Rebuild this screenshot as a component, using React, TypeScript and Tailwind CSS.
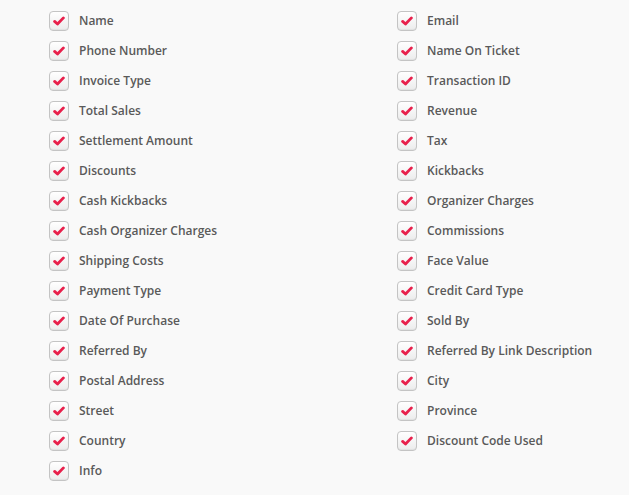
import React from "react";

const left = [
  "Name",
  "Phone Number",
  "Invoice Type",
  "Total Sales",
  "Settlement Amount",
  "Discounts",
  "Cash Kickbacks",
  "Cash Organizer Charges",
  "Shipping Costs",
  "Payment Type",
  "Date Of Purchase",
  "Referred By",
  "Postal Address",
  "Street",
  "Country",
  "Info",
];

const right = [
  "Email",
  "Name On Ticket",
  "Transaction ID",
  "Revenue",
  "Tax",
  "Kickbacks",
  "Organizer Charges",
  "Commissions",
  "Face Value",
  "Credit Card Type",
  "Sold By",
  "Referred By Link Description",
  "City",
  "Province",
  "Discount Code Used",
];

function Check({ label }: { label: string }) {
  return (
    <label className="flex h-[30px] items-center gap-[10px]">
      <span className="flex h-[20px] w-[20px] items-center justify-center rounded-[4px] border border-[#c4c4c4] bg-gradient-to-b from-white to-[#ececec] shadow-[inset_0_-1px_1px_rgba(0,0,0,0.05)]">
        <svg width="12" height="10" viewBox="0 0 12 10">
          <path
            d="M1.6 5.4 L4.5 8 L10.4 1.9"
            fill="none"
            stroke="#e8204b"
            strokeWidth="2.8"
            strokeLinecap="round"
            strokeLinejoin="round"
          />
        </svg>
      </span>
      <span className="text-[12px] font-semibold text-[#5a5a5a]">{label}</span>
    </label>
  );
}

export default function App() {
  return (
    <div
      className="min-h-[495px] w-[629px] bg-[#f9f9f9] pl-[49px] pt-[6px]"
      style={{ fontFamily: '"Open Sans", sans-serif' }}
    >
      <div className="grid grid-cols-[348px_1fr]">
        <div className="flex flex-col">
          {left.map((l) => (
            <Check key={l} label={l} />
          ))}
        </div>
        <div className="flex flex-col">
          {right.map((l) => (
            <Check key={l} label={l} />
          ))}
        </div>
      </div>
    </div>
  );
}
